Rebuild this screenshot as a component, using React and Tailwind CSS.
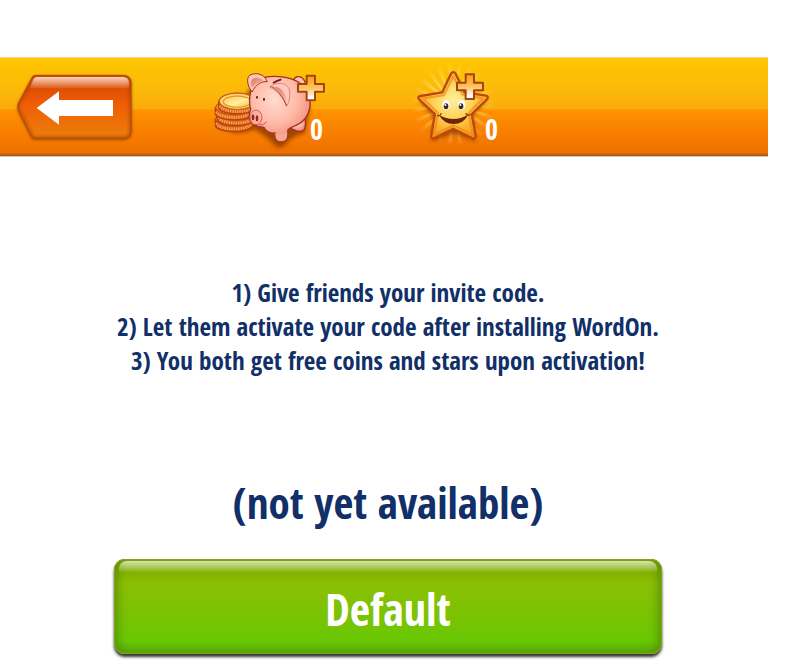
const backShape =
  "M105 73H370Q393 73 393 96V239Q393 262 370 262H105Q98 262 94 255L56 180Q50 168 56 156L94 84Q98 73 105 73Z";

function BackArt() {
  return (
    <svg viewBox="0 21 450 297" className="h-[99px] w-[150px]" aria-hidden="true">
      <defs>
        <linearGradient id="backBody" x1="0" y1="0" x2="0" y2="1">
          <stop offset="0" stopColor="#e05a10" />
          <stop offset=".22" stopColor="#e04e04" />
          <stop offset=".45" stopColor="#f05d06" />
          <stop offset="1" stopColor="#ea800a" />
        </linearGradient>
        <linearGradient id="backGloss" x1="0" y1="0" x2="0" y2="1">
          <stop offset="0" stopColor="#fff" stopOpacity=".75" />
          <stop offset="1" stopColor="#fff" stopOpacity=".06" />
        </linearGradient>
        <filter id="soft" x="-20%" y="-20%" width="140%" height="140%">
          <feGaussianBlur stdDeviation="5" />
        </filter>
        <clipPath id="backClip">
          <path d={backShape} />
        </clipPath>
      </defs>
      <path d="M105 76H370Q395 76 395 99V243Q395 266 370 266H103Q96 266 92 258L54 182Q50 168 54 158L94 84Z" fill="#7a3c00" opacity=".75" filter="url(#soft)" />
      <path d={backShape} fill="url(#backBody)" />
      <g clipPath="url(#backClip)">
        <path d={backShape} fill="none" stroke="#a83a00" strokeWidth="14" opacity=".5" filter="url(#soft)" />
      </g>
      <path d={backShape} fill="none" stroke="#b04a08" strokeWidth="3" />
      <path d="M110 78H368Q387 78 387 96V112H92V106Q100 78 110 78Z" fill="url(#backGloss)" />
      <path d="M110 171L177 121V147H339V195H177V221Z" fill="#fff" />
    </svg>
  );
}

function Plus({ x, y }) {
  return (
    <g transform={`translate(${x} ${y})`}>
      <path d="M27 3H52V28H79V51H52V77H27V51H1V28H27Z" fill="url(#plusFill)" stroke="#a4440e" strokeWidth="6" strokeLinejoin="round" />
    </g>
  );
}

function Coin({ x, y }) {
  return (
    <g transform={`translate(${x} ${y})`}>
      <path d="M0 0V18C0 44 112 44 112 18V0Z" fill="#e0621a" stroke="#b3420f" strokeWidth="4" />
      <path d="M4 13C12 36 100 36 108 13" fill="none" stroke="#ffbb66" strokeOpacity=".75" strokeWidth="9" strokeDasharray="4 3" />
      <ellipse cx="56" cy="0" rx="55" ry="22" fill="#f08b2f" stroke="#bd4f12" strokeWidth="3" />
    </g>
  );
}

function PiggyArt() {
  return (
    <svg viewBox="0 6 312 297" className="h-[99px] w-[104px] shrink-0 overflow-visible" aria-hidden="true">
      <defs>
        <radialGradient id="pink" cx=".42" cy=".35" r=".68">
          <stop offset="0" stopColor="#ffdccf" />
          <stop offset=".55" stopColor="#ffbaa8" />
          <stop offset="1" stopColor="#f08472" />
        </radialGradient>
        <linearGradient id="earIn" x1="0" y1="0" x2="1" y2="1">
          <stop offset="0" stopColor="#dd7a66" />
          <stop offset="1" stopColor="#ffb7a3" />
        </linearGradient>
        <linearGradient id="plusFill" x1="0" y1="0" x2="0" y2="1">
          <stop offset="0" stopColor="#ff9a08" />
          <stop offset=".5" stopColor="#ffc260" />
          <stop offset=".9" stopColor="#fff" />
        </linearGradient>
        <linearGradient id="coinTop" x1="0" y1="0" x2="1" y2="1">
          <stop offset="0" stopColor="#ffc64c" />
          <stop offset=".55" stopColor="#fff0a0" />
          <stop offset="1" stopColor="#ffba3c" />
        </linearGradient>
        <filter id="pigShade" x="-20%" y="-20%" width="140%" height="150%">
          <feGaussianBlur stdDeviation="6" />
        </filter>
      </defs>
      <path d="M40 210Q90 245 145 220Q195 250 205 267Q225 285 243 260Q260 240 296 232L312 150L140 90Z" fill="#853000" opacity=".75" filter="url(#pigShade)" />
      <Coin x={28} y={189} />
      <Coin x={34} y={171} />
      <Coin x={28} y={154} />
      <Coin x={38} y={136} />
      <ellipse cx="94" cy="136" rx="54" ry="25" fill="#ffd875" stroke="#c95f18" strokeWidth="4" />
      <ellipse cx="94" cy="137" rx="42" ry="17" fill="url(#coinTop)" stroke="#e39a2c" strokeWidth="4" />
      <g stroke="#a3301f" strokeWidth="4" strokeLinejoin="round">
        <path d="M262 74C266 60 282 58 291 68C300 75 300 92 292 98Z" fill="#ffc4b4" />
        <path d="M248 215L264 197L292 178C301 190 300 211 294 222Q284 229 270 224Z" fill="url(#pink)" />
        <path d="M150 72C190 54 255 58 290 87C326 125 318 187 270 208Q252 215 246 221L243 243Q240 256 225 256Q210 255 209 242L208 231C191 234 176 222 174 214C158 213 143 208 137 199C127 191 128 171 134 161C129 141 128 106 150 72Z" fill="url(#pink)" />
        <path d="M207 231Q220 238 244 229L243 243Q240 256 225 256Q210 255 209 242Z" fill="#f7a895" stroke="none" />
        <path d="M138 108C125 90 119 67 132 57C151 48 176 54 184 77C165 75 149 86 138 108Z" fill="#ffc7b7" strokeWidth="3" />
        <path d="M138 96C132 80 135 64 151 65C163 65 171 72 173 75C156 77 145 86 138 96Z" fill="url(#earIn)" stroke="none" />
        <path d="M191 93C212 74 245 81 250 101C254 120 249 141 241 151C235 134 220 106 191 93Z" fill="#ffcabd" stroke="#c9604e" strokeWidth="2" />
        <path d="M205 92C226 93 241 110 242 138C231 119 217 101 205 92Z" fill="url(#earIn)" stroke="none" />
      </g>
      <path d="M196 91C219 102 235 130 242 150" fill="none" stroke="#ae3b2a" strokeWidth="3" />
      <path d="M201 81Q210 75 226 70" fill="none" stroke="#731c16" strokeWidth="5" />
      <ellipse cx="153" cy="124" rx="3" ry="4" fill="#661914" />
      <ellipse cx="174" cy="130" rx="3" ry="5" fill="#661914" />
      <ellipse cx="150" cy="184" rx="18" ry="22" fill="#ffad9c" stroke="#cd6556" strokeWidth="3" />
      <ellipse cx="141" cy="184" rx="4" ry="9" fill="#8d2a20" />
      <ellipse cx="153" cy="187" rx="4" ry="9" fill="#8d2a20" />
      <path d="M160 206Q172 210 182 197" fill="none" stroke="#c95848" strokeWidth="3" />
      <Plus x={275} y={56} />
    </svg>
  );
}

function StarArt() {
  return (
    <svg viewBox="0 6 240 297" className="h-[99px] w-[80px] shrink-0 overflow-visible" aria-hidden="true">
      <defs>
        <radialGradient id="starFill" cx=".5" cy=".42" r=".6">
          <stop offset="0" stopColor="#fff0a0" />
          <stop offset=".5" stopColor="#ffd050" />
          <stop offset="1" stopColor="#fb9412" />
        </radialGradient>
        <radialGradient id="rayFade" gradientUnits="userSpaceOnUse" cx="145" cy="145" r="126">
          <stop offset=".4" stopColor="#fff4aa" stopOpacity=".6" />
          <stop offset="1" stopColor="#fff4aa" stopOpacity="0" />
        </radialGradient>
        <filter id="starShade" x="-20%" y="-20%" width="140%" height="150%">
          <feGaussianBlur stdDeviation="7" />
        </filter>
      </defs>
      <circle cx="145" cy="145" r="86" fill="none" stroke="url(#rayFade)" strokeWidth="84" strokeDasharray="9 14" />
      <path d="M145 55L178 115L247 132L203 178L211 256L147 232L80 256L89 187L44 134L115 117Z" fill="#883800" opacity=".8" filter="url(#starShade)" />
      <path d="M138 53Q145 44 152 53L178 109L243 119Q253 122 245 131L200 174L212 239Q211 250 202 247L145 218L87 247Q77 249 79 238L90 174L43 131Q35 122 47 120L112 109Z" fill="url(#starFill)" stroke="#bd480a" strokeWidth="7" strokeLinejoin="round" />
      <path d="M145 61L173 116L234 127L191 171L203 237L145 208L87 237L99 171L54 128L117 117Z" fill="none" stroke="#f08a12" strokeWidth="7" strokeOpacity=".7" strokeLinejoin="round" />
      <path d="M102 177Q146 201 190 176Q175 204 146 204Q117 204 102 177Z" fill="#6e2608" />
      <path d="M98 179Q106 181 108 173M183 173Q187 180 195 176" fill="none" stroke="#8b390d" strokeWidth="4" strokeLinecap="round" />
      <ellipse cx="123" cy="147" rx="11" ry="15" fill="#fff" />
      <ellipse cx="170" cy="147" rx="11" ry="15" fill="#fff" />
      <ellipse cx="123" cy="151" rx="7" ry="9" fill="#3b2b26" />
      <ellipse cx="168" cy="151" rx="7" ry="9" fill="#3b2b26" />
      <circle cx="121" cy="147" r="3" fill="#fff" />
      <circle cx="166" cy="147" r="3" fill="#fff" />
      <Plus x={155} y={52} />
    </svg>
  );
}

function Count({ children }) {
  return <span className="pt-[44px] text-[28px] leading-none font-bold text-white">{children}</span>;
}

export default function App() {
  return (
    <div className="mr-[33px] bg-white pt-[57px] font-['Open_Sans_Condensed','Roboto_Condensed',sans-serif] text-[#112f68]">
      <header className="flex h-[100px] items-center border-t border-b border-t-[#ecd98b] border-b-[#cfc4b8] bg-[linear-gradient(to_bottom,#fec700_0%,#fcb80a_35%,#fbaa0b_52%,#ff9300_53%,#f57800_85%,#ed7004_97%,#a65c12_99%)]">
        <button type="button" aria-label="Back" className="shrink-0">
          <BackArt />
        </button>
        <button type="button" aria-label="Add coins" className="ml-[56px] flex w-[120px] items-center">
          <PiggyArt />
          <Count>0</Count>
        </button>
        <button type="button" aria-label="Add stars" className="ml-[79px] flex w-[120px] items-center">
          <StarArt />
          <Count>0</Count>
        </button>
      </header>
      <main className="flex flex-col pr-[106px] pl-[114px] pt-[118px] pb-[6px] text-center">
        <ol className="text-[25px] leading-[34px] font-bold whitespace-nowrap">
          <li>1) Give friends your invite code.</li>
          <li>2) Let them activate your code after installing WordOn.</li>
          <li>3) You both get free coins and stars upon activation!</li>
        </ol>
        <p className="mt-[98px] text-[43px] leading-[56px] font-bold">(not yet available)</p>
        <button
          type="button"
          className="relative mt-[28px] h-[95px] rounded-[11px] bg-[linear-gradient(to_bottom,#86ad00_0%,#80b000_14%,#8bc003_25%,#7bc303_60%,#69c703_86%,#56a90a_100%)] pt-[4px] text-[44px] font-bold text-white shadow-[0_3px_3px_#333,inset_0_0_1px_1px_#84a51f,inset_8px_0_12px_-6px_#4f8404,inset_-8px_0_12px_-6px_#4f8404]"
        >
          <span className="absolute inset-x-[5px] top-[2px] h-[12px] rounded-t-[8px] bg-linear-to-b from-white/70 to-transparent" />
          Default
        </button>
      </main>
    </div>
  );
}
